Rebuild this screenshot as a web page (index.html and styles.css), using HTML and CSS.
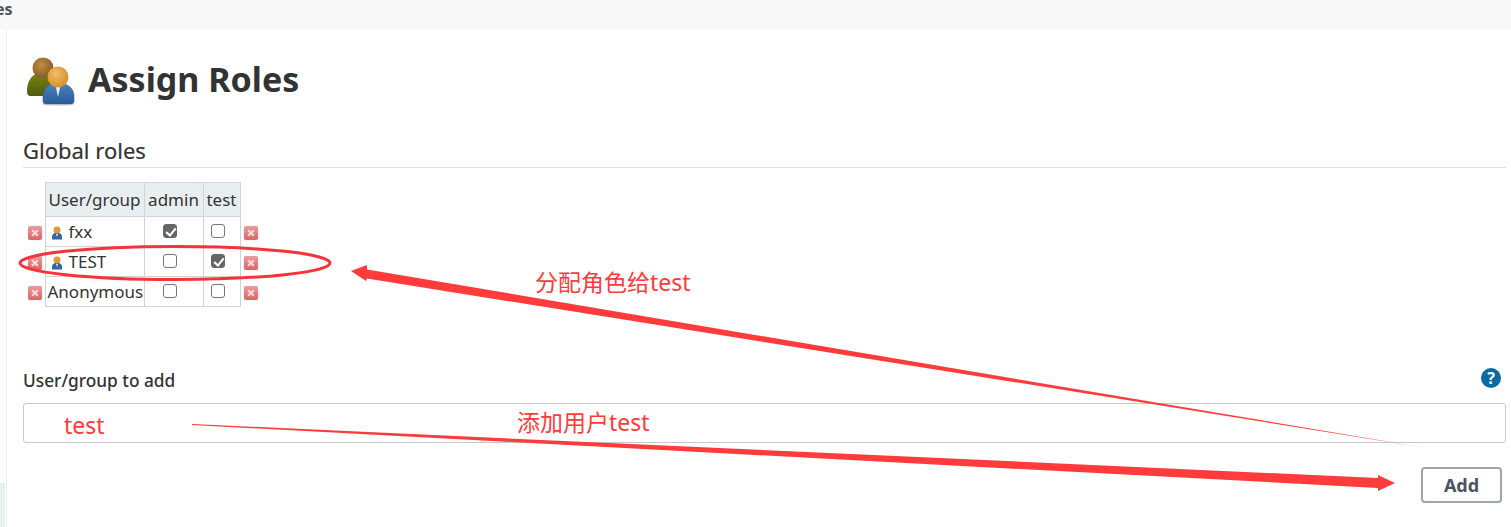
FILE: index.html
```html
<!DOCTYPE html>
<html lang="en-US">
<head>
    <meta charset="UTF-8">
    <title>Assign Roles</title>
    <link rel="stylesheet" href="styles.css">
</head>
<body>
    <div class="topbar"><span class="crumb">es</span></div>
    <div class="page">
        <div class="sidebar"><div class="sidebar-stub"></div></div>
        <main class="content">
            <h1 class="title">
                <svg class="title-icon" width="52" height="54" viewBox="0 0 52 54">
                    <defs>
                        <radialGradient id="headBrown" cx="0.4" cy="0.35" r="0.7">
                            <stop offset="0" stop-color="#c08c42"/>
                            <stop offset="1" stop-color="#7d5a24"/>
                        </radialGradient>
                        <radialGradient id="headOrange" cx="0.4" cy="0.35" r="0.7">
                            <stop offset="0" stop-color="#f2bc66"/>
                            <stop offset="1" stop-color="#d18d2a"/>
                        </radialGradient>
                        <linearGradient id="bodyGreen" x1="0" y1="0" x2="0" y2="1">
                            <stop offset="0" stop-color="#76840f"/>
                            <stop offset="1" stop-color="#4f5c0c"/>
                        </linearGradient>
                        <linearGradient id="bodyBlue" x1="0" y1="0" x2="0" y2="1">
                            <stop offset="0" stop-color="#4a80bd"/>
                            <stop offset="1" stop-color="#2a5c9a"/>
                        </linearGradient>
                    </defs>
                    <ellipse cx="34" cy="51" rx="16" ry="2" fill="#000" opacity="0.12"/>
                    <path d="M3 38c0-9 4-15 9-17h14c5 2 8 7 8 13v5c0 2-1 4-3 4H7c-3 0-4-2-4-5z" fill="url(#bodyGreen)"/>
                    <circle cx="19" cy="15" r="10.500" fill="url(#headBrown)"/>
                    <path d="M22 51c-2 0-3-1-3-3v-5c0-6 3-10 8-12h14c5 2 9 6 9 12v5c0 2-1 3-3 3z" fill="url(#bodyBlue)" stroke="#2a5284" stroke-width="0.5"/>
                    <path d="M31 30h6l-3 14z" fill="#e8eef5"/>
                    <circle cx="34" cy="24" r="10.500" fill="url(#headOrange)"/>
                </svg>
                Assign Roles
            </h1>
            <h2 class="section-title">Global roles</h2>

            <table class="roles">
                <thead>
                    <tr>
                        <td class="side"></td>
                        <th class="col-user">User/group</th>
                        <th class="col-admin">admin</th>
                        <th class="col-test">test</th>
                        <td class="side"></td>
                    </tr>
                </thead>
                <tbody>
                    <tr>
                        <td class="side"><span class="remove"></span></td>
                        <td class="name">
                            <svg class="user-icon" width="12" height="14" viewBox="0 0 12 14"><path d="M1 13.500v-3C1 8.500 2.500 7.500 4 7h4c1.500.5 3 1.500 3 3.500v3z" fill="#3464a4"/><path d="M5 8h2l-1 3z" fill="#e8eef5"/><circle cx="6" cy="4" r="3.500" fill="#dd9a35"/></svg>fxx
                        </td>
                        <td class="check"><span class="box on"></span></td>
                        <td class="check"><span class="box"></span></td>
                        <td class="side"><span class="remove"></span></td>
                    </tr>
                    <tr>
                        <td class="side"><span class="remove"></span></td>
                        <td class="name">
                            <svg class="user-icon" width="12" height="14" viewBox="0 0 12 14"><path d="M1 13.500v-3C1 8.500 2.500 7.500 4 7h4c1.500.5 3 1.500 3 3.500v3z" fill="#3464a4"/><path d="M5 8h2l-1 3z" fill="#e8eef5"/><circle cx="6" cy="4" r="3.500" fill="#dd9a35"/></svg>TEST
                        </td>
                        <td class="check"><span class="box"></span></td>
                        <td class="check"><span class="box on"></span></td>
                        <td class="side"><span class="remove"></span></td>
                    </tr>
                    <tr>
                        <td class="side"><span class="remove"></span></td>
                        <td class="name anon">Anonymous</td>
                        <td class="check"><span class="box"></span></td>
                        <td class="check"><span class="box"></span></td>
                        <td class="side"><span class="remove"></span></td>
                    </tr>
                </tbody>
            </table>

            <div class="field-head">
                <label class="field-label">User/group to add</label>
                <span class="help">?</span>
            </div>
            <div class="field-input"></div>
            <div class="actions"><button class="btn">Add</button></div>
        </main>
    </div>

    <!-- red annotations drawn on top of the screenshot -->
    <svg class="marks" width="1511" height="527" viewBox="0 0 1511 527">
        <ellipse cx="175" cy="263" rx="155" ry="16.500" fill="none" stroke="#f5333a" stroke-width="3"/>
        <path d="M1420 447L367 269.500L367 265L351 271L366 281L367 278.500z" fill="#ff3b3b"/>
        <path d="M192 424L1378 478L1378 475L1395 483L1378 491L1378 488L192 425z" fill="#ff3b3b"/>
    </svg>
    <span class="note note-roles">分配角色给test</span>
    <span class="note note-user">添加用户test</span>
    <span class="note note-test">test</span>
</body>
</html>
```

FILE: styles.css
```css
* {
    box-sizing: border-box;
}

body {
    margin: 0;
    height: 527px;
    overflow: hidden;
    background: #fff;
    color: #333;
    font-family: "Noto Sans", "Open Sans", sans-serif;
    position: relative;
}

.topbar {
    height: 30px;
    background: #f8f8f8;
    overflow: hidden;
}

.crumb {
    display: block;
    margin-left: -5px;
    font-size: 16px;
    font-weight: 700;
    line-height: 18px;
    color: #4d545d;
}

.page {
    display: flex;
    height: 497px;
}

.sidebar {
    width: 7px;
    flex: none;
    border-right: 1px solid #e9eef1;
    display: flex;
    align-items: flex-end;
}

.sidebar-stub {
    width: 5px;
    height: 44px;
    background: #e9eef1;
}

.content {
    flex: 1;
    padding: 0 5px 0 16px;
}

.title {
    display: flex;
    align-items: center;
    gap: 12px;
    margin: 23px 0 0;
    padding-bottom: 2px;
    height: 54px;
    font-size: 34px;
    font-weight: 700;
    color: #333;
}

.title-icon {
    flex: none;
    margin: 2px 0 0 1px;
}

.section-title {
    margin: 31px 0 0;
    height: 30px;
    font-size: 22px;
    line-height: 24px;
    font-weight: 400;
    -webkit-text-stroke: 0.2px #333;
    border-bottom: 1px solid #dfe1e2;
}

.roles {
    border-collapse: collapse;
    table-layout: fixed;
    width: 235px;
    margin: 14px 0 0 2px;
    font-size: 17px;
    color: #333;
}

.roles th,
.roles td.name,
.roles td.check {
    border: 1px solid #d3d3cf;
    font-weight: 400;
}

.roles th {
    height: 34px;
    padding: 0;
    background: #e9eef1;
}

.col-user {
    width: 99px;
}

.col-admin {
    width: 59px;
}

.col-test {
    width: 37px;
}

.roles tbody tr {
    height: 30px;
}

.side {
    width: 20px;
    padding: 3px 0 0 3px;
}

.name {
    padding: 0 0 0 5px;
    white-space: nowrap;
}

.anon {
    padding-left: 2px;
}

.user-icon {
    vertical-align: -2px;
    margin-right: 6px;
}

.check {
    text-align: center;
    vertical-align: top;
    padding: 7px 7px 0 0;
    line-height: 0;
}

.box {
    display: inline-block;
    width: 14px;
    height: 14px;
    border: 1px solid #767676;
    border-radius: 3px;
    background: #fff;
    position: relative;
}

.box.on {
    background: #666;
    border-color: #666;
}

.box.on::after {
    content: "";
    position: absolute;
    left: 4px;
    top: 1px;
    width: 4px;
    height: 8px;
    border: solid #fff;
    border-width: 0 2px 2px 0;
    transform: rotate(40deg);
}

.remove {
    display: block;
    width: 14px;
    height: 14px;
    border-radius: 2px;
    background: linear-gradient(#eb9c9d, #dc6466);
    box-shadow: 0 0 1px #e8a0a0;
    position: relative;
}

.remove::before,
.remove::after {
    content: "";
    position: absolute;
    left: 3px;
    top: 6px;
    width: 8px;
    height: 2px;
    background: #f6dcdc;
    transform: rotate(45deg);
}

.remove::after {
    transform: rotate(-45deg);
}

.field-head {
    display: flex;
    justify-content: space-between;
    align-items: center;
    margin: 59px 0 0;
    height: 24px;
}

.field-label {
    margin-top: 4px;
    font-size: 17.300px;
    font-weight: 500;
    color: #333;
}

.help {
    width: 20px;
    height: 20px;
    margin-right: 5px;
    border-radius: 50%;
    background: #0b6aa2;
    color: #fff;
    font-size: 16px;
    font-weight: 700;
    line-height: 20px;
    text-align: center;
}

.field-input {
    height: 40px;
    margin-top: 13px;
    border: 1px solid #c8c8c8;
    border-radius: 3px;
    background: #fff;
}

.actions {
    display: flex;
    justify-content: flex-end;
    margin-top: 24px;
    padding-right: 4px;
}

.btn {
    width: 81px;
    height: 36px;
    padding: 0;
    border: 2px solid #9aa7b2;
    border-radius: 4px;
    background: #fff;
    color: #4d545d;
    font-family: inherit;
    font-size: 18px;
    font-weight: 700;
}

.marks {
    position: absolute;
    left: 0;
    top: 0;
    pointer-events: none;
}

.note {
    position: absolute;
    color: #ff3b3b;
    font-family: "Noto Sans", "Noto Sans CJK SC", sans-serif;
    font-size: 23px;
    line-height: 30px;
    white-space: nowrap;
}

.note-roles {
    left: 535px;
    top: 267px;
}

.note-user {
    left: 517px;
    top: 407px;
}

.note-test {
    left: 64px;
    top: 410px;
}
```
